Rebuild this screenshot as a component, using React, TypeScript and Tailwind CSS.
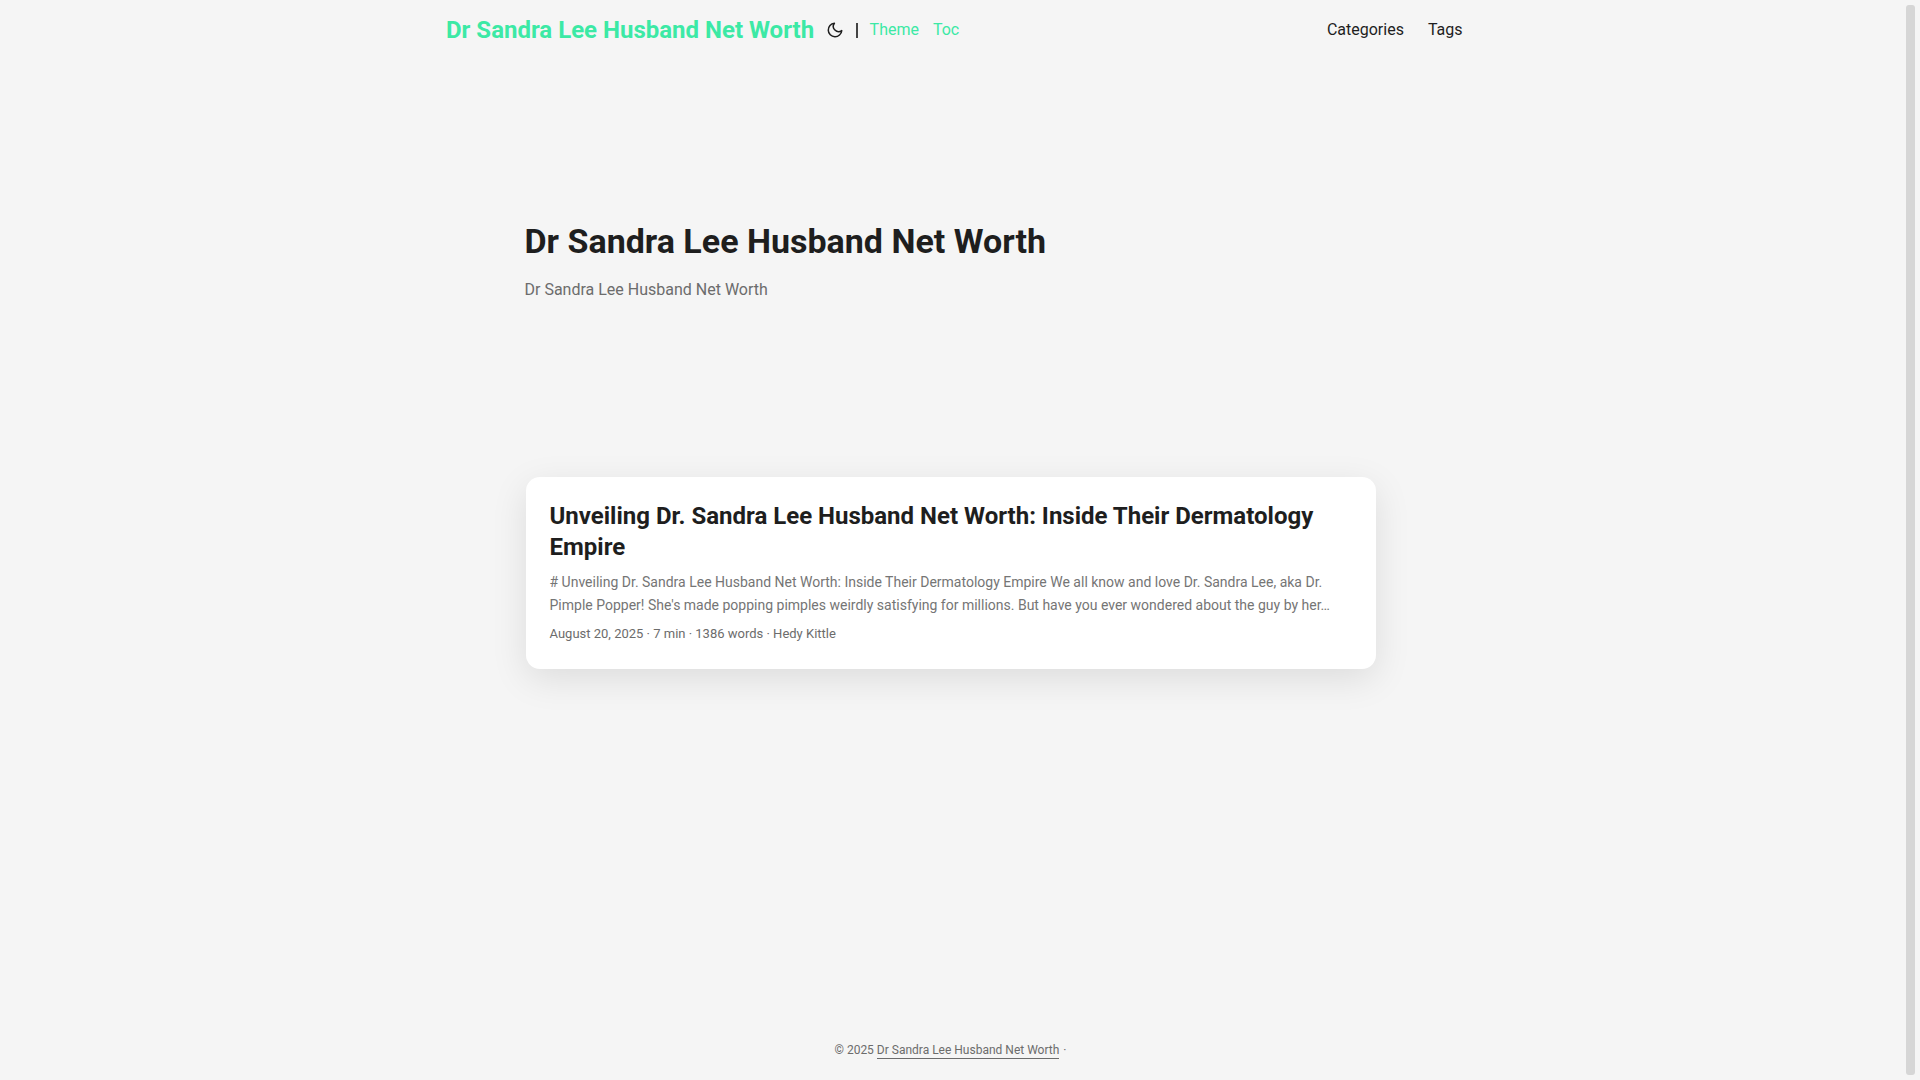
export default function App() {
  return (
    <div className="relative h-screen w-full overflow-hidden bg-[#f5f5f5] font-['Roboto',sans-serif] text-[#1e1e1e]">
      <div className="flex h-full w-[1901px] flex-col">
        <header className="mx-auto flex h-[60px] w-[1024px] shrink-0 items-center justify-between pl-[7.5px]">
          <div className="flex items-center">
            <a className="text-[24px] font-bold text-[#3ce9a5]">Dr Sandra Lee Husband Net Worth</a>
            <svg className="ml-3 h-[18px] w-[18px]" viewBox="0 0 24 24" fill="none" stroke="currentColor" strokeWidth="2" strokeLinecap="round" strokeLinejoin="round">
              <path d="M21 12.79A9 9 0 1 1 11.21 3 7 7 0 0 0 21 12.79z" />
            </svg>
            <span className="ml-[11.5px] h-[15px] w-[2px] bg-[#444444]" />
            <a className="ml-3 text-[16px] text-[#3ce9a5]">Theme</a>
            <a className="ml-[14px] text-[16px] text-[#3ce9a5]">Toc</a>
          </div>
          <nav className="flex items-center gap-6 text-[16px]">
            <a>Categories</a>
            <a>Tags</a>
          </nav>
        </header>
        <main className="mx-auto flex w-[852px] flex-col">
          <div className="mt-[158px]">
            <h1 className="text-[34px] font-bold leading-[46px]">Dr Sandra Lee Husband Net Worth</h1>
            <p className="mt-[14px] text-[16px] leading-[24px] text-[#6c6c6c]">Dr Sandra Lee Husband Net Worth</p>
          </div>
          <article className="mx-px mt-[175px] flex h-[192px] flex-col rounded-[14px] bg-white px-6 pt-[24px] shadow-[0_10px_36px_rgba(0,0,0,0.1)]">
            <h2 className="text-[24px] font-bold leading-[31px] text-[#1e1e1e]">Unveiling Dr. Sandra Lee Husband Net Worth: Inside Their Dermatology Empire</h2>
            <p className="mt-2 text-[14px] leading-[23px] text-[#757575]">
              # Unveiling Dr. Sandra Lee Husband Net Worth: Inside Their Dermatology Empire We all know and love Dr. Sandra Lee, aka Dr. Pimple Popper! She's made popping pimples weirdly satisfying for millions. But have you ever wondered about the guy by her…
            </p>
            <div className="mt-[8px] text-[13px] leading-[18px] text-[#6c6c6c]">August 20, 2025&nbsp;·&nbsp;7 min&nbsp;·&nbsp;1386 words&nbsp;·&nbsp;Hedy Kittle</div>
          </article>
        </main>
        <footer className="mt-auto flex h-[51px] items-start justify-center pt-[13px] text-[12px] leading-[16px] text-[#6c6c6c]">
          <span>© 2025&nbsp;</span>
          <a className="border-b border-[#6c6c6c]">Dr Sandra Lee Husband Net Worth</a>
          <span className="ml-[4px]">·</span>
        </footer>
      </div>
      <div className="absolute right-[5px] top-[5px] bottom-[5px] w-[9px] rounded-[3px] bg-[#d6d6d6]" />
    </div>
  );
}
